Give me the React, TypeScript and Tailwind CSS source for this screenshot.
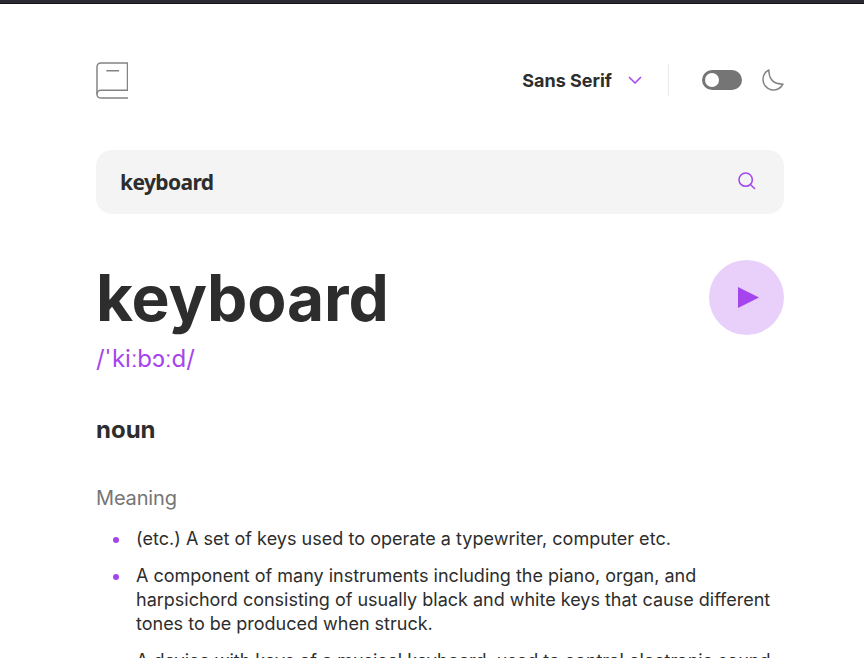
const meanings = [
  { text: "(etc.) A set of keys used to operate a typewriter, computer etc.", spacing: "tracking-[0.032px]" },
  { text: "A component of many instruments including the piano, organ, and harpsichord consisting of usually black and white keys that cause different tones to be produced when struck.", spacing: "tracking-[-0.005px]" },
  { text: "A device with keys of a musical keyboard, used to control electronic sound", spacing: "tracking-[-0.02px]" },
];

export default function App() {
  return (
    <div className="h-[658px] overflow-hidden bg-white text-[#2d2d2d] font-[Inter,sans-serif]">
      <div className="h-1 border-b border-[#14101c] bg-[#2b2a33]" />
      <main className="ml-24 w-[688px] pt-[58px]">
        <header className="flex h-[37px] items-start justify-between">
          <svg width="32" height="37" viewBox="0 0 32.5 38" preserveAspectRatio="none" fill="none" stroke="#838383" strokeWidth="1.5">
            <path d="M1 33V5a4 4 0 0 1 4-4h27v28M5 29h28M5 37h28" />
            <path d="M5 37a4 4 0 1 1 0-8M10.500 9h13" />
          </svg>
          <div className="flex h-[35px] items-center">
            <span className="pt-0.5 text-lg font-bold leading-6">Sans Serif</span>
            <svg className="ml-4" width="14" height="8" viewBox="0 0 14 8" fill="none" stroke="#A445ED" strokeWidth="1.5"><path d="m1 1 6 6 6-6" /></svg>
            <div className="ml-[26px] h-8 w-px bg-[#e9e9e9]" />
            <div className="ml-[33px] flex h-5 w-10 items-center rounded-full bg-[#757575] px-[3px]"><div className="size-[14px] rounded-full bg-white" /></div>
            <svg className="ml-5" width="22" height="22" viewBox="0 0 22 22" fill="none" stroke="#838383" strokeWidth="1.5" strokeLinecap="round" strokeLinejoin="round"><path d="M1 10.449a10.544 10.544 0 0 0 19.993 4.686C11.544 15.135 6.858 10.448 6.858 1A10.545 10.545 0 0 0 1 10.449Z" /></svg>
          </div>
        </header>
        <div className="mt-[51px] flex h-16 items-center justify-between rounded-2xl bg-[#f4f4f4] pl-6 pr-7">
          <span className="pb-px font-['Noto_Sans',sans-serif] text-[21px] font-bold leading-7 tracking-[-0.6px]">keyboard</span>
          <svg className="mb-0.5" width="18" height="18" viewBox="0 0 18 18" fill="none" stroke="#A445ED" strokeWidth="1.5" strokeLinecap="round" strokeLinejoin="round"><path d="m12.663 12.663 3.887 3.887M1 7.664a6.665 6.665 0 1 0 13.330 0 6.665 6.665 0 0 0-13.330 0Z" /></svg>
        </div>
        <section className="mt-[45px] flex items-center justify-between">
          <div>
            <h1 className="text-[64px] font-bold leading-[77px] tracking-[-0.1px]">keyboard</h1>
            <p className="mt-2 text-2xl leading-[29px] text-[#A445ED]">/<span className="pl-px pr-0.5">ˈ</span>kiːbɔːd/</p>
          </div>
          <svg className="-mt-[37px]" width="75" height="75" viewBox="0 0 75 75" fill="#A445ED"><circle cx="37.5" cy="37.5" r="37.5" opacity=".25" /><path d="M29 27v21l21-10.500z" /></svg>
        </section>
        <h2 className="mt-[42px] text-2xl font-bold leading-[29px]">noun</h2>
        <h3 className="mt-[42px] text-xl leading-6 tracking-[-0.15px] text-[#757575]">Meaning</h3>
        <ul className="ml-[17px] mt-[17px] text-lg leading-6">
          {meanings.map(({ text, spacing }) => (
            <li className="mb-[13px] flex items-start" key={text}>
              <span className="mr-[17px] mt-[10px] size-[6px] shrink-0 rounded-full bg-[#A445ED]" />
              <span className={spacing}>{text}</span>
            </li>
          ))}
        </ul>
      </main>
    </div>
  );
}
